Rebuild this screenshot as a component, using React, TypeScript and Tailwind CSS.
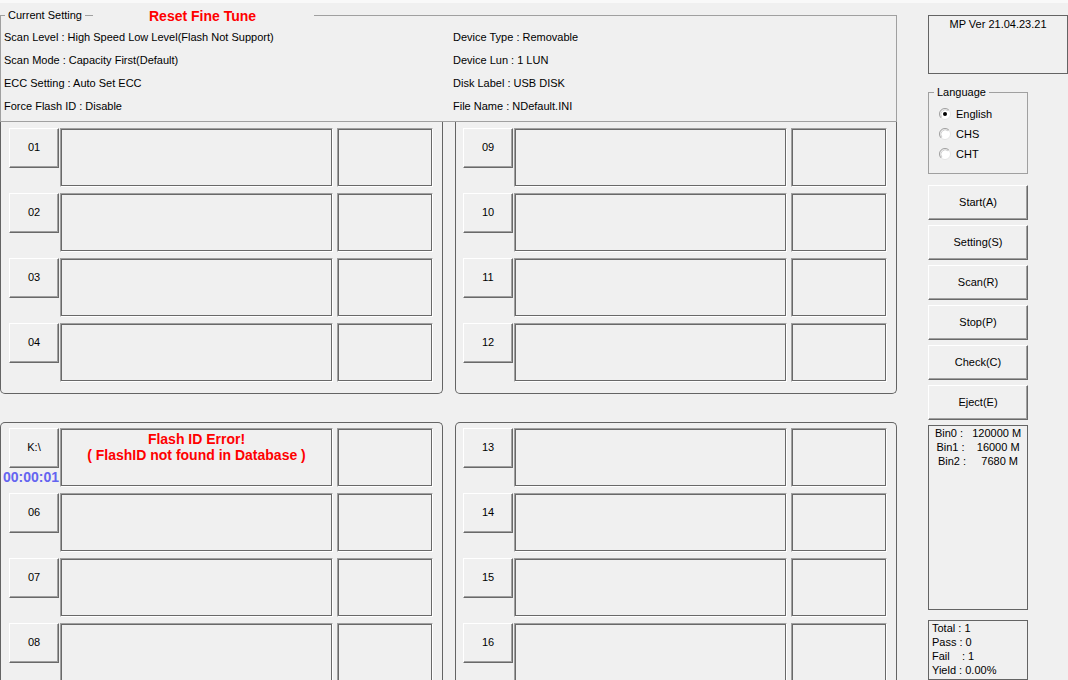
import React from "react";

const btn =
  "bg-[#f0f0f0] border border-t-white border-l-white border-r-[#696969] border-b-[#696969] shadow-[inset_-1px_-1px_0_#a0a0a0] flex items-center justify-center";
const sunk =
  "border border-t-[#a0a0a0] border-l-[#a0a0a0] border-r-white border-b-white shadow-[inset_1px_1px_0_#696969,inset_-1px_-1px_0_#696969]";

function Slot({ label, timer, error }: { label: string; timer?: string; error?: boolean }) {
  return (
    <div className="flex gap-px">
      <div className="flex w-[50px] flex-col">
        <div className={btn + " h-[40px] w-[50px] pb-[3px]"}>{label}</div>
        {timer && (
          <div className="-ml-[6px] mt-px whitespace-nowrap text-[14px] font-bold leading-[16px] text-[#6464f0]">
            {timer}
          </div>
        )}
      </div>
      <div className={sunk + " h-[59px] w-[273px] pt-[2px] text-center"}>
        {error && (
          <div className="text-[14px] font-bold leading-[16px] text-[#ff0000]">
            <div>Flash ID Error!</div>
            <div>( FlashID not found in Database )</div>
          </div>
        )}
      </div>
      <div className={sunk + " ml-[3px] h-[59px] w-[96px]"} />
    </div>
  );
}

function Radio({ checked, label }: { checked?: boolean; label: string }) {
  return (
    <div className="flex h-[20px] items-center gap-[5px]">
      <svg width="12" height="12" viewBox="0 0 12 12">
        <circle cx="6" cy="6" r="5.5" fill="#fff" stroke="#e3e3e3" />
        <path d="M2.1 9.9 A5.5 5.5 0 0 1 9.9 2.1" stroke="#a0a0a0" fill="none" />
        <path d="M2.9 9.1 A4.4 4.4 0 0 1 9.1 2.9" stroke="#d0d0d0" fill="none" />
        {checked && <circle cx="6" cy="6" r="2" fill="#000" />}
      </svg>
      <span>{label}</span>
    </div>
  );
}

export default function App() {
  const settingsLeft = [
    "Scan Level : High Speed Low Level(Flash Not Support)",
    "Scan Mode : Capacity First(Default)",
    "ECC Setting : Auto Set ECC",
    "Force Flash ID : Disable",
  ];
  const settingsRight = [
    "Device Type : Removable",
    "Device Lun : 1 LUN",
    "Disk Label : USB DISK",
    "File Name : NDefault.INI",
  ];
  const buttons = ["Start(A)", "Setting(S)", "Scan(R)", "Stop(P)", "Check(C)", "Eject(E)"];

  return (
    <div className="h-[680px] w-[1068px] overflow-hidden bg-[#f0f0f0] font-['Liberation_Sans',Arial,sans-serif] text-[11px] leading-[14px] text-black">
      <div className="h-[3px] bg-[#f9f9f9]" />
      <div className="flex pt-[12px]">
        {/* Left area */}
        <div className="w-[897px]">
          <div className="relative h-[107px] border border-[#a0a0a0]">
            <div className="absolute left-[4px] top-[-8px] bg-[#f0f0f0] px-[3px] leading-[14px]">Current Setting</div>
            <div className="absolute left-[92px] top-[-9px] h-[18px] w-[221px] bg-[#f0f0f0] pl-[56px] text-[14px] font-bold leading-[18px] text-[#ff0000]">
              Reset Fine Tune
            </div>
            <div className="grid grid-cols-[449px_1fr] pl-[3px] pt-[10px]">
              {settingsLeft.map((l, i) => (
                <React.Fragment key={i}>
                  <div className="h-[23px] leading-[23px]">{l}</div>
                  <div className="h-[23px] leading-[23px]">{settingsRight[i]}</div>
                </React.Fragment>
              ))}
            </div>
          </div>

          <div className="flex gap-[12px]">
            <div className="flex w-[443px] flex-col gap-[6px] rounded-b-[5px] border border-t-0 border-[#646464] pb-[11px] pl-[8px] pt-[6px]">
              {["01", "02", "03", "04"].map((l) => (
                <Slot key={l} label={l} />
              ))}
            </div>
            <div className="flex w-[442px] flex-col gap-[6px] rounded-b-[5px] border border-t-0 border-[#646464] pb-[11px] pl-[7px] pt-[6px]">
              {["09", "10", "11", "12"].map((l) => (
                <Slot key={l} label={l} />
              ))}
            </div>
          </div>

          <div className="mt-[28px] flex gap-[12px]">
            <div className="flex h-[300px] w-[443px] flex-col gap-[6px] rounded-t-[5px] border border-b-0 border-[#646464] pl-[8px] pt-[5px]">
              <Slot label="K:\" timer="00:00:01" error />
              {["06", "07", "08"].map((l) => (
                <Slot key={l} label={l} />
              ))}
            </div>
            <div className="flex h-[300px] w-[442px] flex-col gap-[6px] rounded-t-[5px] border border-b-0 border-[#646464] pl-[7px] pt-[5px]">
              {["13", "14", "15", "16"].map((l) => (
                <Slot key={l} label={l} />
              ))}
            </div>
          </div>
        </div>

        {/* Right panel */}
        <div className="ml-[31px] w-[140px]">
          <div className="h-[59px] w-[140px] border border-[#646464] pt-[1px] text-center">MP Ver 21.04.23.21</div>

          <div className="relative mt-[18px] h-[82px] w-[100px] border border-[#a0a0a0] pl-[10px] pt-[11px]">
            <div className="absolute left-[5px] top-[-8px] bg-[#f0f0f0] px-[3px]">Language</div>
            <Radio checked label="English" />
            <Radio label="CHS" />
            <Radio label="CHT" />
          </div>

          <div className="mt-[11px] flex flex-col gap-[5px]">
            {buttons.map((b) => (
              <div key={b} className={btn + " h-[35px] w-[100px] pb-px"}>
                {b}
              </div>
            ))}
          </div>

          <div className="mt-[5px] h-[185px] w-[100px] whitespace-pre border border-[#646464] text-center">
            <div>{"Bin0 :   120000 M"}</div>
            <div>{"Bin1 :    16000 M"}</div>
            <div>{"Bin2 :     7680 M"}</div>
          </div>

          <div className="mt-[10px] h-[60px] w-[100px] whitespace-pre border border-[#646464] pl-[3px]">
            <div>Total : 1</div>
            <div>Pass : 0</div>
            <div>{"Fail    : 1"}</div>
            <div>Yield : 0.00%</div>
          </div>
        </div>
      </div>
    </div>
  );
}
